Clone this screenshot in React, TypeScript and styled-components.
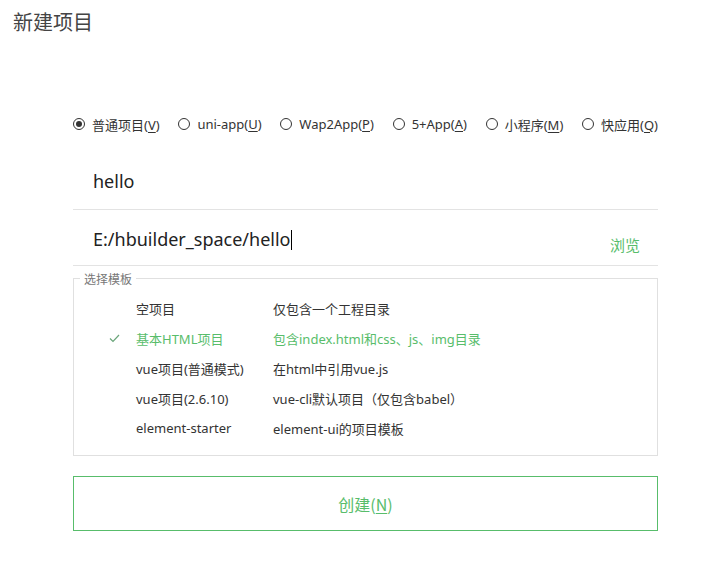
import React from "react";
import styled, { createGlobalStyle } from "styled-components";

const Global = createGlobalStyle`
  html, body { margin: 0; padding: 0; background: #fff; }
  body { font-family: "Noto Sans", "Noto Sans CJK SC", sans-serif; color: #333; }
`;

const GREEN = "#58bd6b";

const Page = styled.div`
  width: 703px;
  height: 561px;
  box-sizing: border-box;
  padding: 8px 0 0 0;
  position: relative;
`;

const Title = styled.h1`
  margin: 0 0 0 13px;
  font-size: 20px;
  font-weight: 400;
  line-height: 28px;
  color: #444;
  font-family: "Noto Sans CJK SC", sans-serif;
`;

const Form = styled.div`
  margin: 76px 0 0 73px;
  width: 585px;
  display: flex;
  flex-direction: column;
`;

const RadioRow = styled.div`
  display: flex;
  justify-content: space-between;
  align-items: center;
  height: 24px;
`;

const RadioItem = styled.label`
  display: flex;
  align-items: center;
  gap: 7px;
  font-size: 13px;
  color: #333;
  font-family: "Noto Sans", "Noto Sans CJK SC", sans-serif;
  white-space: nowrap;
`;

const Circle = styled.span<{ $on?: boolean }>`
  width: 12px;
  height: 12px;
  box-sizing: border-box;
  border: 1px solid #333;
  border-radius: 50%;
  display: flex;
  align-items: center;
  justify-content: center;
  &::after {
    content: "";
    display: ${(p) => (p.$on ? "block" : "none")};
    width: 6px;
    height: 6px;
    border-radius: 50%;
    background: #333;
  }
`;

const U = styled.span`
  text-decoration: underline;
  text-underline-offset: 2px;
`;

const Field = styled.div<{ $h: number }>`
  height: ${(p) => p.$h}px;
  border-bottom: 1px solid #e3e3e3;
  display: flex;
  align-items: center;
  justify-content: space-between;
  padding-left: 20px;
  box-sizing: border-box;
`;

const FieldText = styled.span`
  font-size: 18px;
  color: #222;
  font-family: "Noto Sans", sans-serif;
  position: relative;
`;

const Caret = styled.span`
  display: inline-block;
  width: 1px;
  height: 20px;
  background: #000;
  vertical-align: -4px;
`;

const Browse = styled.span`
  font-size: 15px;
  color: ${GREEN};
  margin: 13px 18px 0 0;
  font-family: "Noto Sans CJK SC", sans-serif;
`;

const Fieldset = styled.fieldset`
  margin: 4px 0 0 0;
  padding: 6px 0 12px 0;
  border: 1px solid #e0e0e0;
  min-width: 0;
`;

const Legend = styled.legend`
  margin-left: 6px;
  padding: 0 4px;
  font-size: 12px;
  color: #777;
  font-family: "Noto Sans CJK SC", sans-serif;
`;

const TplRow = styled.div<{ $on?: boolean }>`
  display: grid;
  grid-template-columns: 62px 137px 1fr;
  align-items: center;
  height: 30px;
  font-size: 13px;
  color: ${(p) => (p.$on ? GREEN : "#333")};
  font-family: "Noto Sans", "Noto Sans CJK SC", sans-serif;
`;

const Check = styled.span`
  justify-self: end;
  margin-right: 16px;
  display: flex;
`;

const CreateBtn = styled.div`
  margin-top: 20px;
  height: 55px;
  width: 585px;
  box-sizing: border-box;
  background: #fff;
  border: 1px solid ${GREEN};
  color: ${GREEN};
  font-size: 16px;
  font-family: "Noto Sans CJK SC", sans-serif;
  display: flex;
  align-items: center;
  justify-content: center;
  cursor: pointer;
`;

const radios = [
  { t: "普通项目", k: "V", on: true },
  { t: "uni-app", k: "U" },
  { t: "Wap2App", k: "P" },
  { t: "5+App", k: "A" },
  { t: "小程序", k: "M" },
  { t: "快应用", k: "Q" },
];

const templates = [
  { a: "空项目", b: "仅包含一个工程目录" },
  { a: "基本HTML项目", b: "包含index.html和css、js、img目录", on: true },
  { a: "vue项目(普通模式)", b: "在html中引用vue.js" },
  { a: "vue项目(2.6.10)", b: "vue-cli默认项目（仅包含babel）" },
  { a: "element-starter", b: "element-ui的项目模板" },
];

export default function App() {
  return (
    <>
      <Global />
      <Page>
        <Title>新建项目</Title>
        <Form>
          <RadioRow>
            {radios.map((r) => (
              <RadioItem key={r.k}>
                <Circle $on={r.on} />
                <span>
                  {r.t}(<U>{r.k}</U>)
                </span>
              </RadioItem>
            ))}
          </RadioRow>
          <Field $h={74}>
            <FieldText style={{ marginTop: 16 }}>hello</FieldText>
          </Field>
          <Field $h={56}>
            <FieldText style={{ marginTop: 2 }}>
              E:/hbuilder_space/hello
              <Caret />
            </FieldText>
            <Browse>浏览</Browse>
          </Field>
          <Fieldset>
            <Legend>选择模板</Legend>
            {templates.map((t) => (
              <TplRow key={t.a} $on={t.on}>
                <Check>
                  {t.on && (
                    <svg width="11" height="9" viewBox="0 0 11 9">
                      <path d="M1 4.5 L4 7.5 L10 1" fill="none" stroke="#6aa57a" strokeWidth="1.2" />
                    </svg>
                  )}
                </Check>
                <span>{t.a}</span>
                <span>{t.b}</span>
              </TplRow>
            ))}
          </Fieldset>
          <CreateBtn role="button">
            创建(<U>N</U>)
          </CreateBtn>
        </Form>
      </Page>
    </>
  );
}
